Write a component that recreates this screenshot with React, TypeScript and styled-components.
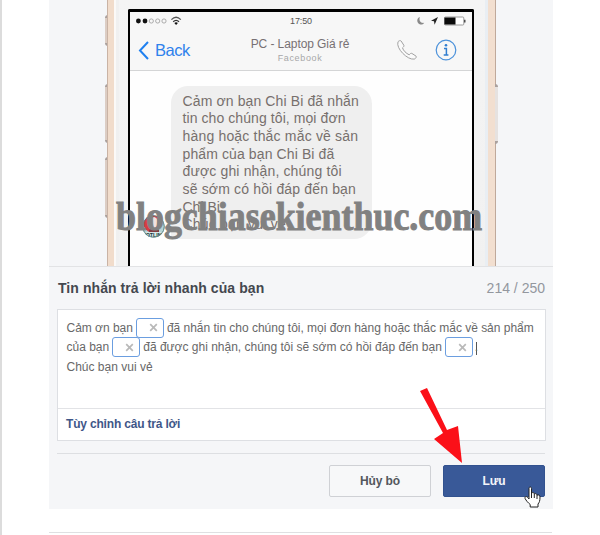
import React from "react";
import styled, { createGlobalStyle } from "styled-components";

const GlobalStyle = createGlobalStyle`
  * { box-sizing: border-box; }
  body { margin: 0; background: #fff; font-family: "Liberation Sans", Arial, sans-serif; }
`;

const Page = styled.div`
  width: 600px;
  height: 535px;
  overflow: hidden;
  border-left: 2px solid #dcdcdc;
  padding: 0 47px;
`;

const Panel = styled.main`
  position: relative;
  width: 504px;
  height: 509px;
  background: #f5f6f8;
`;

const Divider = styled.div`
  width: 503px;
  height: 1px;
  margin-top: 23px;
  background: #dfe0e2;
`;

const Stage = styled.section`
  height: 267px;
  display: flex;
  justify-content: flex-start;
  padding-left: 55px;
  overflow: hidden;
  border-bottom: 1px solid #e2e3e5;
`;

const ButtonRail = styled.div<{ $side: "left" | "right" }>`
  flex: none;
  width: 4px;
  padding-top: ${(p) => (p.$side === "left" ? "15px" : "84px")};
  display: flex;
  flex-direction: column;
  align-items: ${(p) => (p.$side === "left" ? "flex-end" : "flex-start")};
`;

const SideButton = styled.div<{ $side: "left" | "right"; $height: number; $gap?: number }>`
  flex: none;
  width: 3px;
  height: ${(p) => p.$height}px;
  margin-top: ${(p) => p.$gap ?? 0}px;
  background: ${(p) => (p.$side === "left" ? "#dccdc4" : "#e6e2e0")};
  border-top: 3px solid #aaa19e;
  border-bottom: 3px solid #aaa19e;
  border-radius: ${(p) => (p.$side === "left" ? "3px 0 0 3px" : "0 3px 3px 0")};
`;

const PhoneBody = styled.div`
  flex: none;
  width: 387px;
  height: 267px;
  padding: 9px 13px 0 13px;
  background: linear-gradient(#f4f4f4, #f1f1f1);
  border-left: 6px solid #f1dccb;
  border-right: 7px solid #f2dfd0;
  box-shadow: inset 2px 0 #fbf9f7, inset 5px 0 #f0f0f0, inset -3px 0 #e9eef3, -1px 0 #c9b3a5, 1px 0 #bfa99b;
`;

const Screen = styled.div`
  width: 346px;
  height: 260px;
  margin-left: 1px;
  border: solid #000;
  border-width: 3px 2px 0 2px;
  border-radius: 2px 2px 0 0;
  background: #fefefe;
`;

const PhoneHeader = styled.header`
  height: 59px;
  background: #f7f7f7;
  border-bottom: 1px solid #d4d5d6;
`;

const StatusBar = styled.div`
  height: 17px;
  display: grid;
  grid-template-columns: 143px 55px 1fr;
  align-items: center;
  padding: 1px 6px 0 6px;
`;

const Clock = styled.span`
  padding-left: 11px;
  font-size: 9px;
  letter-spacing: -0.1px;
  color: #555;
`;

const StatusIcons = styled.div`
  display: flex;
  justify-content: flex-end;
`;

const NavBar = styled.div`
  height: 41px;
  display: grid;
  grid-template-columns: 93px 138px 1fr;
  padding-left: 8px;
`;

const Back = styled.div`
  display: flex;
  align-items: center;
  gap: 6px;
  padding-top: 1px;
  font-size: 16.5px;
  letter-spacing: -0.5px;
  color: #2f82ec;
  svg { flex: none; }
`;

const Title = styled.div`
  display: flex;
  flex-direction: column;
  align-items: center;
  padding: 8px 0 0 0;
  font-size: 12px;
  line-height: 15px;
  letter-spacing: -0.08px;
  color: #777174;
  white-space: nowrap;
`;

const Subtitle = styled.span`
  font-size: 9px;
  line-height: 13px;
  letter-spacing: 0.65px;
  color: #a7a7a9;
`;

const NavActions = styled.div`
  display: flex;
  align-items: center;
  gap: 18px;
  padding-left: 28px;
`;

const Conversation = styled.div`
  display: flex;
  align-items: flex-end;
  gap: 6px;
  padding: 15px 0 0 12px;
`;

const Bubble = styled.div`
  width: 201px;
  height: 153px;
  padding: 6.5px 0 0 11.5px;
  border-radius: 17px 18px 18px 3px;
  background: #efefef;
  color: #77706d;
  font-size: 14px;
  line-height: 17.7px;
  white-space: nowrap;
`;

const BubbleLine = styled.div<{ $track?: number }>`
  letter-spacing: ${(p) => p.$track ?? 0}px;
`;

const Watermark = styled.div`
  position: absolute;
  left: 67px;
  top: 192px;
  font: bold 41px/48px "Liberation Serif", serif;
  transform: scaleX(0.876);
  transform-origin: 0 0;
  -webkit-text-stroke: 1px #818181;
  color: #818181;
  white-space: nowrap;
`;

const ReplyHeader = styled.div`
  display: flex;
  justify-content: space-between;
  height: 42px;
  padding: 12px 8px 0 9px;
  line-height: 18px;
`;

const Heading = styled.h2`
  margin: 0;
  font-size: 14px;
  line-height: 18px;
  letter-spacing: 0.07px;
  color: #44484f;
`;

const Counter = styled.span`
  font-size: 14px;
  color: #93979e;
`;

const Editor = styled.div`
  width: 489px;
  height: 132px;
  margin-left: 8px;
  background: #fff;
  border: 1px solid #dddfe3;
`;

const Message = styled.div`
  height: 99px;
  padding: 8px 0 0 8.5px;
  border-bottom: 1px solid #e2e3e6;
  font-size: 12px;
  color: #686868;
`;

const MessageLine = styled.div<{ $track?: number }>`
  display: flex;
  align-items: center;
  height: 19.6px;
  white-space: pre;
  letter-spacing: ${(p) => p.$track ?? 0}px;
`;

const Token = styled.span`
  flex: none;
  display: flex;
  align-items: center;
  justify-content: flex-end;
  width: 28px;
  height: 20px;
  padding-right: 5px;
  margin: 0 3px;
  border: 1px solid #6b9ee0;
  border-radius: 3px;
`;

const Caret = styled.span`
  width: 1px;
  height: 13px;
  margin-top: 2px;
  margin-right: -2px;
  background: #555;
`;

const CustomizeLink = styled.a`
  display: block;
  padding-left: 8px;
  font-size: 12px;
  font-weight: bold;
  line-height: 30px;
  letter-spacing: -0.18px;
  color: #3f5788;
`;

const Actions = styled.footer`
  display: flex;
  justify-content: flex-end;
  gap: 12px;
  width: 488px;
  margin: 12px 0 0 8px;
  padding-top: 11px;
  border-top: 1px solid #dddfe2;
`;

const Button = styled.button<{ $primary?: boolean }>`
  width: 102px;
  height: 32px;
  padding: 0;
  border: 1px solid ${(p) => (p.$primary ? "#32528f" : "#cfd1d5")};
  border-radius: 2px;
  background: ${(p) => (p.$primary ? "#395998" : "#f7f8f9")};
  color: ${(p) => (p.$primary ? "#f3f5fa" : "#53575d")};
  font: bold 12px "Liberation Sans", Arial, sans-serif;
  letter-spacing: -0.1px;
`;

const Pointer = styled.svg<{ $left: number; $top: number }>`
  position: absolute;
  left: ${(p) => p.$left}px;
  top: ${(p) => p.$top}px;
`;

const Variable = () => (
  <Token>
    <svg width="9" height="9" viewBox="0 0 9 9">
      <path d="M1.2 1.2 7.8 7.8M7.8 1.2 1.2 7.8" stroke="#b9b9b9" strokeWidth="1.7" />
    </svg>
  </Token>
);

const Signal = () => (
  <svg width="46" height="12" viewBox="0 0 46 12">
    <circle cx="2.4" cy="6" r="2.4" fill="#111" />
    <circle cx="9" cy="6" r="2.4" fill="#111" />
    {[15.3, 21.7, 28].map((x) => (
      <circle key={x} cx={x} cy="6" r="2.1" fill="none" stroke="#999" strokeWidth=".8" />
    ))}
    <g fill="none" stroke="#333" strokeWidth="1.3">
      <path d="M35.4 4.6Q40.1 0 44.8 4.6" stroke="#555" />
      <path d="M37.2 6.7Q40.1 4 43 6.7" />
    </g>
    <path d="M38.3 8Q40.1 6.7 41.9 8L40.1 10Z" fill="#111" />
  </svg>
);

const StatusGlyphs = () => (
  <svg width="50" height="12" viewBox="0 0 50 12">
    <path d="M3.8 2C.7 3 .4 7.3 3.2 9c2 1.2 4.3.4 5-1.2C4.5 8.4 2.7 5.5 3.8 2Z" fill="#8a8a8a" />
    <path d="M22 2 15 5.8l3 .5.6 3.5Z" fill="#222" />
    <rect x="28.5" y="2" width="19.3" height="8" rx="1" fill="#fff" stroke="#9a9a9a" />
    <rect x="28.5" y="2.5" width="11" height="7" fill="#0b0b0b" />
    <path d="M48.8 4.8v2.6" stroke="#333" strokeWidth="1.3" />
  </svg>
);

const Avatar = () => (
  <svg width="23" height="25" viewBox="0 0 23 25">
    <defs>
      <clipPath id="avatar-clip"><circle cx="11.5" cy="12.5" r="11" /></clipPath>
    </defs>
    <g clipPath="url(#avatar-clip)">
      <rect width="23" height="25" fill="#477b7d" />
      <path d="M0 18V0h23v18l-6 2H6Z" fill="#b8d4d5" />
      <ellipse cx="10" cy="9.5" rx="8.5" ry="9" fill="#d63c43" />
      <ellipse cx="12" cy="8.5" rx="3.7" ry="5.5" fill="#f2e1dd" />
      <path d="M7 16q5-4 10 0v3H7Z" fill="#813d42" />
      <rect y="18" width="23" height="6" fill="#d5e5e5" />
      <text x="11.5" y="23" textAnchor="middle" fontSize="5.3" fontWeight="bold" fill="#18393b" fontFamily="Liberation Sans, sans-serif">HOTLINE</text>
    </g>
    <circle cx="11.5" cy="12.5" r="10.7" fill="none" stroke="#557f80" strokeWidth=".8" />
  </svg>
);

export default function App() {
  return (
    <>
      <GlobalStyle />
      <Page>
        <Panel>
          <Stage>
            <ButtonRail $side="left">
              <SideButton $side="left" $height={31} />
              <SideButton $side="left" $height={59} $gap={38} />
              <SideButton $side="left" $height={61} $gap={14} />
            </ButtonRail>
            <PhoneBody>
              <Screen>
                <PhoneHeader>
                  <StatusBar>
                    <Signal />
                    <Clock>17:50</Clock>
                    <StatusIcons><StatusGlyphs /></StatusIcons>
                  </StatusBar>
                  <NavBar>
                    <Back>
                      <svg width="11" height="19" viewBox="0 0 11 19">
                        <path d="M10 1 2 9.5l8 8.5" fill="none" stroke="#1f80f0" strokeWidth="2" />
                      </svg>
                      Back
                    </Back>
                    <Title>
                      PC - Laptop Giá rẻ
                      <Subtitle>Facebook</Subtitle>
                    </Title>
                    <NavActions>
                      <svg width="20" height="20" viewBox="0 0 20 20">
                        <path d="M1 1.8C1.8.8 3.3.1 4.1 1l2.7 4.2c.5.9-.2 1.6-1.3 2.6.8 2.8 3.6 5.6 6.7 7 .9-1.2 1.9-1.9 2.8-1.3l4 2.6c.9.8-.4 2.6-1.7 3C10.6 20.3-1.4 8.3 1 1.8Z" fill="#fafafa" stroke="#a1a1a1" />
                      </svg>
                      <svg width="22" height="22" viewBox="0 0 22 22">
                        <circle cx="11" cy="11" r="9.8" fill="none" stroke="#4b91da" strokeWidth="1.2" />
                        <circle cx="11" cy="6.3" r="1.3" fill="#307ed0" />
                        <path d="M9 9.4h2.4v6.3M8.7 16h4.7" fill="none" stroke="#307ed0" strokeWidth="1.5" />
                      </svg>
                    </NavActions>
                  </NavBar>
                </PhoneHeader>
                <Conversation>
                  <Avatar />
                  <Bubble>
                    <BubbleLine $track={0.12}>Cảm ơn bạn Chi Bi đã nhắn</BubbleLine>
                    <BubbleLine $track={0.08}>tin cho chúng tôi, mọi đơn</BubbleLine>
                    <BubbleLine $track={0.18}>hàng hoặc thắc mắc về sản</BubbleLine>
                    <BubbleLine $track={0.11}>phẩm của bạn Chi Bi đã</BubbleLine>
                    <BubbleLine $track={0.15}>được ghi nhận, chúng tôi</BubbleLine>
                    <BubbleLine $track={0.16}>sẽ sớm có hồi đáp đến bạn</BubbleLine>
                    <BubbleLine>Chi Bi.</BubbleLine>
                    <BubbleLine $track={0.2}>Chúc bạn vui vẻ</BubbleLine>
                  </Bubble>
                </Conversation>
              </Screen>
            </PhoneBody>
            <ButtonRail $side="right">
              <SideButton $side="right" $height={60} />
            </ButtonRail>
          </Stage>
          <ReplyHeader>
            <Heading>Tin nhắn trả lời nhanh của bạn</Heading>
            <Counter>214 / 250</Counter>
          </ReplyHeader>
          <Editor>
            <Message>
              <MessageLine $track={-0.02}>Cảm ơn bạn<Variable />đã nhắn tin cho chúng tôi, mọi đơn hàng hoặc thắc mắc về sản phẩm</MessageLine>
              <MessageLine>của bạn<Variable />đã được ghi nhận, chúng tôi sẽ sớm có hồi đáp đến bạn<Variable /><Caret />.</MessageLine>
              <MessageLine>Chúc bạn vui vẻ</MessageLine>
            </Message>
            <CustomizeLink>Tùy chỉnh câu trả lời</CustomizeLink>
          </Editor>
          <Actions>
            <Button>Hủy bỏ</Button>
            <Button $primary>Lưu</Button>
          </Actions>
          <Watermark>blogchiasekienthuc.com</Watermark>
          <Pointer $left={371} $top={386} width="44" height="79" viewBox="0 0 44 79">
            <path d="M0 5 7 2 27 44 38 40 42 77 14 53 23 47Z" fill="#fb1018" />
          </Pointer>
          <Pointer $left={475} $top={486} width="18" height="22" viewBox="0 0 18 22">
            <path d="M5 13V2.5c0-2 2.5-2 2.5 0V7c1.8-1 2.7 0 2.8.9 1.5-.8 2.6.1 2.7 1.2 2-.7 3 .4 3 1.9 0 4-.7 5.5-2 7v3H6.2v-2.5C4.3 17 2 14.5 1 12.3c-.6-1.8 1.5-2.4 2.6-1L5 13Z" fill="#fff" stroke="#222" />
            <path d="M7.5 7v5M10.3 8v4M13 9v4" stroke="#222" />
          </Pointer>
        </Panel>
        <Divider />
      </Page>
    </>
  );
}
